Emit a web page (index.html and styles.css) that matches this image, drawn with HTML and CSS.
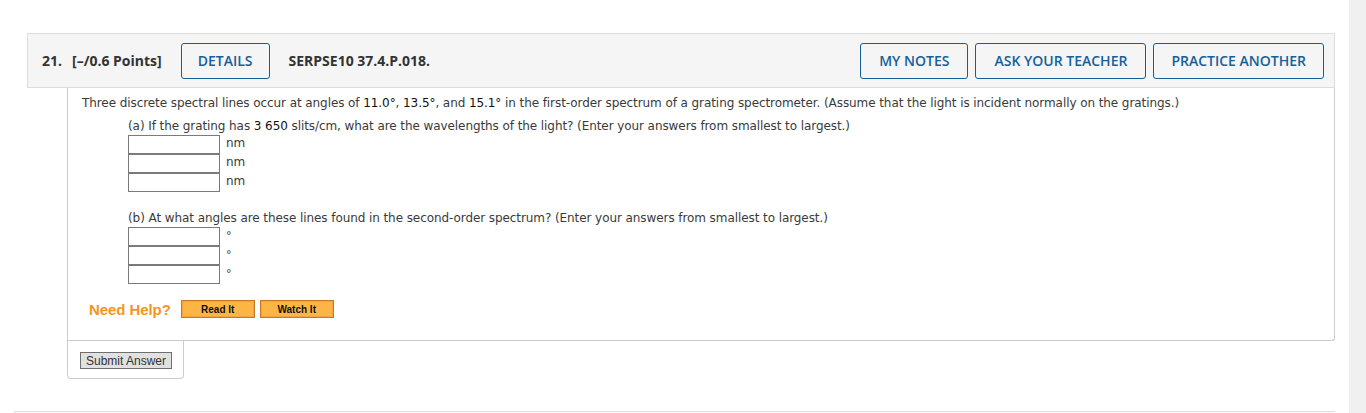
FILE: index.html
```html
<!DOCTYPE html>
<html>
<head>
<meta charset="utf-8">
<link rel="stylesheet" href="styles.css">
</head>
<body>
<div class="page">
  <div class="main">
    <div class="question">
      <div class="qhead">
        <span class="qnum">21.</span>
        <span class="qpts">[–/0.6 Points]</span>
        <button class="hbtn details">DETAILS</button>
        <span class="qid">SERPSE10 37.4.P.018.</span>
        <div class="hright">
          <button class="hbtn">MY NOTES</button>
          <button class="hbtn">ASK YOUR TEACHER</button>
          <button class="hbtn practice">PRACTICE ANOTHER</button>
        </div>
      </div>
      <div class="qbody">
        <p class="intro">Three discrete spectral lines occur at angles of <span class="num">11.0°</span>, <span class="num">13.5°</span>, and <span class="num">15.1°</span> in the first-order spectrum of a grating spectrometer. (Assume that the light is incident normally on the gratings.)</p>
        <div class="part">
          <p class="ptext">(a) If the grating has <span class="num">3 650</span> slits/cm, what are the wavelengths of the light? (Enter your answers from smallest to largest.)</p>
          <div class="ans"><span class="box"></span><span class="unit">nm</span></div>
          <div class="ans"><span class="box"></span><span class="unit">nm</span></div>
          <div class="ans"><span class="box"></span><span class="unit">nm</span></div>
        </div>
        <div class="part partb">
          <p class="ptext">(b) At what angles are these lines found in the second-order spectrum? (Enter your answers from smallest to largest.)</p>
          <div class="ans"><span class="box"></span><span class="unit deg">°</span></div>
          <div class="ans"><span class="box"></span><span class="unit deg">°</span></div>
          <div class="ans"><span class="box"></span><span class="unit deg">°</span></div>
        </div>
        <div class="help">
          <span class="needhelp">Need Help?</span>
          <button class="obtn">Read It</button>
          <button class="obtn">Watch It</button>
        </div>
      </div>
      <div class="submit">
        <button class="sbtn">Submit Answer</button>
      </div>
    </div>
    <div class="next"></div>
  </div>
  <div class="scrollbar"></div>
</div>
</body>
</html>
```
FILE: styles.css
```css
html, body {
  margin: 0;
  padding: 0;
  background: #fff;
  height: 413px;
  overflow: hidden;
}
.page {
  display: flex;
  height: 413px;
}
.main {
  flex: 1;
  padding: 33px 14px 0 14px;
}
.scrollbar {
  width: 17px;
  background: #f0f0f0;
}
.question {
  margin-left: 13px;
}
.qhead {
  display: flex;
  align-items: center;
  height: 55px;
  box-sizing: border-box;
  background: #f5f5f5;
  border: 1px solid #dddddd;
  padding: 0 10px 0 14px;
  font-family: "Open Sans", sans-serif;
  font-size: 14px;
  font-weight: 700;
  color: #333;
}
.qnum { margin-right: 10px; }
.qpts { margin-right: 19px; }
.qid { margin-left: 19px; }
.hbtn {
  font-family: "Open Sans", sans-serif;
  font-size: 14px;
  font-weight: 600;
  color: #16609a;
  background: #f5f5f5;
  border: 1px solid #155f97;
  border-radius: 3px;
  height: 36px;
  padding: 0 18px;
  margin: 0;
}
.details { padding: 0 16px; }
.practice { padding: 0 17px; }
.hright {
  margin-left: auto;
  display: flex;
  gap: 7px;
}
.qbody {
  margin-left: 40px;
  border: 1px solid #cccccc;
  border-top: none;
  border-radius: 0 0 3px 0;
  padding: 7px 14px 22px 14px;
  font-family: "DejaVu Sans", sans-serif;
  font-size: 12px;
  letter-spacing: -0.08px;
  line-height: 17px;
  color: #3a3a3a;
}
.num { color: #111; }
.intro { margin: 0 0 6px 0; }
.part { margin-left: 46px; }
.ptext { margin: 0; }
.partb { margin-top: 18px; }
.ans {
  display: flex;
  align-items: flex-start;
  height: 19px;
}
.box {
  width: 92px;
  height: 19px;
  box-sizing: border-box;
  border: 1px solid #7a7a7a;
  background: #fff;
}
.unit {
  margin-left: 6px;
  line-height: 17px;
}
.deg { font-size: 11px; }
.help {
  display: flex;
  align-items: center;
  margin-top: 16px;
  margin-left: 7px;
  height: 18px;
}
.needhelp {
  font-family: "Liberation Sans", Arial, sans-serif;
  font-weight: 700;
  font-size: 15px;
  color: #f7941d;
  margin-right: 10px;
}
.obtn {
  width: 74px;
  height: 18px;
  box-sizing: border-box;
  margin: 0 5px 0 0;
  padding: 0;
  background: #fdb645;
  border: 1px solid #c8772b;
  box-shadow: inset 0 0 0 1px #f5a33a;
  font-family: "Liberation Sans", Arial, sans-serif;
  font-weight: 700;
  font-size: 10px;
  color: #111;
}
.submit {
  margin-left: 40px;
  width: 117px;
  box-sizing: border-box;
  border: 1px solid #cccccc;
  border-top: none;
  border-radius: 0 0 4px 4px;
  padding: 11px 0 9px 12px;
}
.sbtn {
  display: block;
  width: 92px;
  height: 17px;
  box-sizing: border-box;
  margin: 0;
  padding: 0;
  background: #e1e1e1;
  border: 1px solid #6f6f6f;
  font-family: "Liberation Sans", Arial, sans-serif;
  font-size: 12px;
  color: #333;
  line-height: 14px;
}
.next {
  margin-top: 32px;
  height: 10px;
  border-top: 1px solid #dddddd;
  background: #fcfcfc;
}
```
